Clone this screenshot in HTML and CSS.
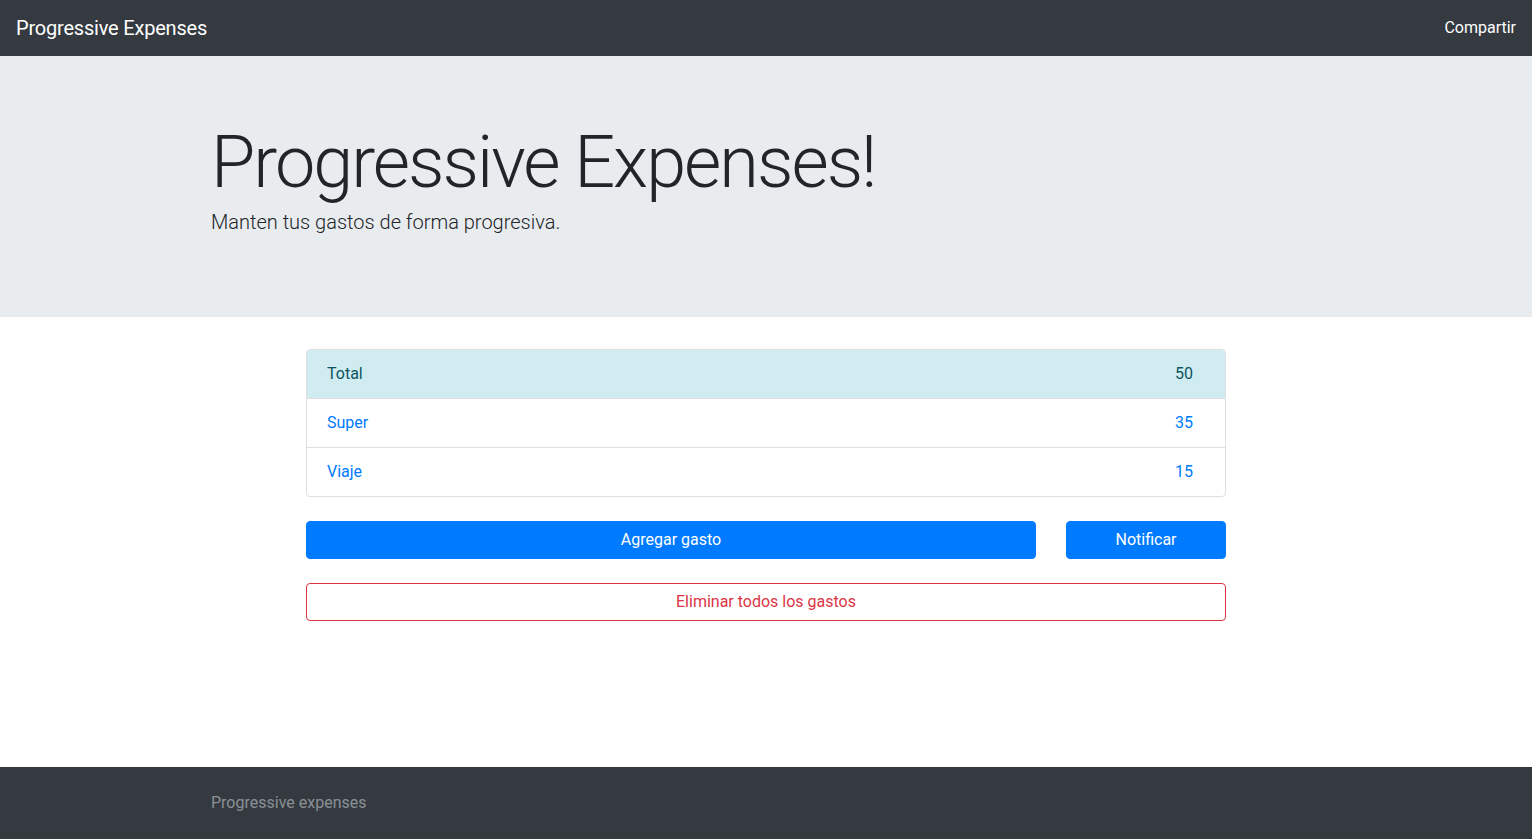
FILE: index.html
```html
<!DOCTYPE html>
<html lang="es">
<head>
<meta charset="utf-8">
<title>Progressive Expenses</title>
<link rel="stylesheet" href="styles.css">
</head>
<body>
<nav class="navbar">
  <a class="brand" href="#">Progressive Expenses</a>
  <a class="nav-link" href="#">Compartir</a>
</nav>
<main class="main">
  <section class="jumbotron">
    <div class="container">
      <h1 class="display">Progressive Expenses!</h1>
      <p class="lead">Manten tus gastos de forma progresiva.</p>
    </div>
  </section>
  <section class="content">
    <ul class="list-group">
      <li class="item item-info"><span>Total</span><span class="num">50</span></li>
      <li class="item item-link"><span>Super</span><span class="num">35</span></li>
      <li class="item item-link"><span>Viaje</span><span class="num">15</span></li>
    </ul>
    <div class="actions">
      <button class="btn btn-primary btn-grow">Agregar gasto</button>
      <button class="btn btn-primary btn-fixed">Notificar</button>
    </div>
    <button class="btn btn-outline-danger btn-block">Eliminar todos los gastos</button>
  </section>
</main>
<footer class="footer">
  <div class="container">
    <span class="footer-text">Progressive expenses</span>
  </div>
</footer>
</body>
</html>
```

FILE: styles.css
```css
* { box-sizing: border-box; }
html, body { height: 100%; }
body {
  margin: 0;
  font-family: Roboto, "Liberation Sans", sans-serif;
  font-size: 16px;
  line-height: 1.5;
  color: #212529;
  background: #fff;
  display: flex;
  flex-direction: column;
  min-height: 100vh;
}
a { text-decoration: none; }

.navbar {
  height: 56px;
  background: #343a40;
  display: flex;
  align-items: center;
  justify-content: space-between;
  padding: 0 16px;
}
.brand {
  color: #fff;
  font-size: 20px;
  line-height: 30px;
  letter-spacing: -0.2px;
}
.nav-link {
  color: #fff;
  font-size: 16px;
}

.main { flex: 1 0 auto; }

.container {
  width: 1140px;
  margin: 0 auto;
  padding: 0 15px;
}

.jumbotron {
  background: #e9ecef;
  padding: 64px 0;
  margin-bottom: 32px;
}
.display {
  margin: 0 0 1px;
  font-size: 72px;
  font-weight: 300;
  line-height: 1.2;
  letter-spacing: -2px;
}
.lead {
  margin: 0 0 16px;
  font-size: 20px;
  font-weight: 300;
  line-height: 30px;
}

.content {
  width: 920px;
  margin: 0 auto;
  padding-bottom: 32px;
}
.list-group {
  list-style: none;
  margin: 0;
  padding: 0;
  border: 1px solid rgba(0,0,0,.125);
  border-radius: 4px;
  overflow: hidden;
}
.item {
  display: flex;
  justify-content: space-between;
  padding: 12px 20px;
  line-height: 24px;
  border-top: 1px solid rgba(0,0,0,.125);
}
.item:first-child { border-top: 0; }
.item-info {
  background: #d1ecf1;
  color: #0c5460;
}
.item-link { color: #007bff; }
.num { padding-right: 12px; }

.actions {
  display: flex;
  gap: 30px;
  margin-top: 24px;
}
.btn {
  font-family: inherit;
  font-size: 16px;
  line-height: 24px;
  padding: 6px 12px;
  border: 1px solid transparent;
  border-radius: 4px;
  cursor: pointer;
  text-align: center;
}
.btn-primary {
  background: #007bff;
  border-color: #007bff;
  color: #fff;
}
.btn-grow { flex: 1; }
.btn-fixed { width: 160px; }
.btn-outline-danger {
  background: #fff;
  border-color: #dc3545;
  color: #dc3545;
}
.btn-block {
  display: block;
  width: 100%;
  margin-top: 24px;
}

.footer {
  background: #343a40;
  padding: 24px 0;
  flex-shrink: 0;
}
.footer-text {
  color: #8a9096;
  line-height: 24px;
}
```
